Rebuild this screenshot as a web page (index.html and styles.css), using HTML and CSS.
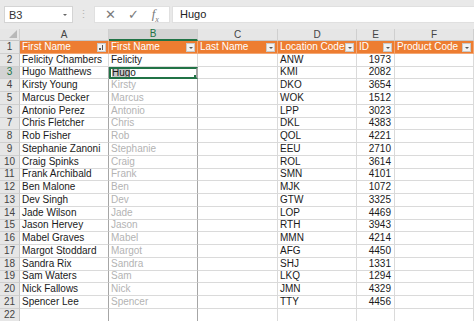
FILE: index.html
```html
<!DOCTYPE html>
<html lang="en">
<head>
    <meta charset="UTF-8">
    <title>Flash Fill - First Name</title>
    <link rel="stylesheet" href="styles.css">
</head>
<body>
    <div class="formula-bar">
        <div class="name-box">B3<span class="name-arrow"></span></div>
        <div class="grip">&#8942;</div>
        <div class="fx-buttons">
            <span class="fx-btn">&#10005;</span>
            <span class="fx-btn">&#10003;</span>
            <span class="fx-btn fx">f<sub>x</sub></span>
        </div>
        <div class="formula-input">Hugo</div>
    </div>

    <div class="sheet">
        <div class="row col-heads">
            <div class="corner"></div>
            <div>A</div>
            <div class="sel">B</div>
            <div>C</div>
            <div>D</div>
            <div>E</div>
            <div>F</div>
        </div>
        <div class="row table-head">
            <div class="rh">1</div>
            <div>First Name<span class="filter sort"></span></div>
            <div>First Name<span class="filter"></span></div>
            <div>Last Name<span class="filter"></span></div>
            <div>Location Code<span class="filter"></span></div>
            <div>ID<span class="filter"></span></div>
            <div>Product Code<span class="filter"></span></div>
        </div>
        <div class="row">
            <div class="rh">2</div><div>Felicity Chambers</div><div>Felicity</div><div></div><div>ANW</div><div class="num">1973</div><div></div>
        </div>
        <div class="row fill">
            <div class="rh sel">3</div><div>Hugo Matthews</div><div class="active"><span class="typed">Hug</span>o</div><div></div><div>KMI</div><div class="num">2082</div><div></div>
        </div>
        <div class="row fill">
            <div class="rh">4</div><div>Kirsty Young</div><div class="ghost">Kirsty</div><div></div><div>DKO</div><div class="num">3654</div><div></div>
        </div>
        <div class="row fill">
            <div class="rh">5</div><div>Marcus Decker</div><div class="ghost">Marcus</div><div></div><div>WOK</div><div class="num">1512</div><div></div>
        </div>
        <div class="row fill">
            <div class="rh">6</div><div>Antonio Perez</div><div class="ghost">Antonio</div><div></div><div>LPP</div><div class="num">3023</div><div></div>
        </div>
        <div class="row fill">
            <div class="rh">7</div><div>Chris Fletcher</div><div class="ghost">Chris</div><div></div><div>DKL</div><div class="num">4383</div><div></div>
        </div>
        <div class="row fill">
            <div class="rh">8</div><div>Rob Fisher</div><div class="ghost">Rob</div><div></div><div>QOL</div><div class="num">4221</div><div></div>
        </div>
        <div class="row fill">
            <div class="rh">9</div><div>Stephanie Zanoni</div><div class="ghost">Stephanie</div><div></div><div>EEU</div><div class="num">2710</div><div></div>
        </div>
        <div class="row fill">
            <div class="rh">10</div><div>Craig Spinks</div><div class="ghost">Craig</div><div></div><div>ROL</div><div class="num">3614</div><div></div>
        </div>
        <div class="row fill">
            <div class="rh">11</div><div>Frank Archibald</div><div class="ghost">Frank</div><div></div><div>SMN</div><div class="num">4101</div><div></div>
        </div>
        <div class="row fill">
            <div class="rh">12</div><div>Ben Malone</div><div class="ghost">Ben</div><div></div><div>MJK</div><div class="num">1072</div><div></div>
        </div>
        <div class="row fill">
            <div class="rh">13</div><div>Dev Singh</div><div class="ghost">Dev</div><div></div><div>GTW</div><div class="num">3325</div><div></div>
        </div>
        <div class="row fill">
            <div class="rh">14</div><div>Jade Wilson</div><div class="ghost">Jade</div><div></div><div>LOP</div><div class="num">4469</div><div></div>
        </div>
        <div class="row fill">
            <div class="rh">15</div><div>Jason Hervey</div><div class="ghost">Jason</div><div></div><div>RTH</div><div class="num">3943</div><div></div>
        </div>
        <div class="row fill">
            <div class="rh">16</div><div>Mabel Graves</div><div class="ghost">Mabel</div><div></div><div>MMN</div><div class="num">4214</div><div></div>
        </div>
        <div class="row fill">
            <div class="rh">17</div><div>Margot Stoddard</div><div class="ghost">Margot</div><div></div><div>AFG</div><div class="num">4450</div><div></div>
        </div>
        <div class="row fill">
            <div class="rh">18</div><div>Sandra Rix</div><div class="ghost">Sandra</div><div></div><div>SHJ</div><div class="num">1331</div><div></div>
        </div>
        <div class="row fill">
            <div class="rh">19</div><div>Sam Waters</div><div class="ghost">Sam</div><div></div><div>LKQ</div><div class="num">1294</div><div></div>
        </div>
        <div class="row fill">
            <div class="rh">20</div><div>Nick Fallows</div><div class="ghost">Nick</div><div></div><div>JMN</div><div class="num">4329</div><div></div>
        </div>
        <div class="row fill">
            <div class="rh">21</div><div>Spencer Lee</div><div class="ghost">Spencer</div><div></div><div>TTY</div><div class="num">4456</div><div></div>
        </div>
        <div class="row fill">
            <div class="rh">22</div><div></div><div></div><div></div><div></div><div></div><div></div>
        </div>
    </div>
</body>
</html>
```

FILE: styles.css
```css
* {
    margin: 0;
    padding: 0;
    box-sizing: border-box;
}

body {
    font-family: 'Liberation Sans', Arial, sans-serif;
    font-size: 10px;
    background: #fff;
    width: 474px;
    height: 321px;
    overflow: hidden;
    color: #1a1a1a;
}

/* formula bar */
.formula-bar {
    height: 29px;
    background: #e9e9e9;
    display: flex;
    align-items: flex-start;
    padding: 6px 0 0 4px;
}

.name-box {
    width: 69px;
    height: 17px;
    background: #fff;
    border: 1px solid #d4d4d4;
    display: flex;
    align-items: center;
    justify-content: space-between;
    padding: 0 5px 0 4px;
    font-size: 11px;
    color: #333;
}

.name-arrow {
    border-left: 2px solid transparent;
    border-right: 2px solid transparent;
    border-top: 2px solid #666;
}

.grip {
    width: 21px;
    text-align: center;
    color: #b5b5b5;
    font-size: 11px;
    line-height: 17px;
}

.fx-buttons {
    width: 76px;
    height: 17px;
    background: #fff;
    border: 1px solid #e0e0e0;
    display: flex;
    align-items: center;
    justify-content: space-around;
    padding: 0 4px;
    color: #7a7a7a;
    font-size: 13px;
}

.fx {
    font-family: 'Liberation Serif', serif;
    font-style: italic;
    font-size: 13px;
}

.fx sub {
    font-size: 8px;
}

.formula-input {
    flex: 1;
    height: 17px;
    margin-left: 2px;
    background: #fff;
    border: 1px solid #e0e0e0;
    border-right: none;
    padding-left: 7px;
    font-size: 11px;
    line-height: 15px;
    color: #222;
}

/* grid */
.row {
    display: grid;
    grid-template-columns: 20px 89px 89px 80px 79px 38px 79px;
    height: 12.75px;
}

.row > div {
    border-right: 1px solid #dadada;
    border-bottom: 1px solid #dadada;
    padding: 0 2px;
    white-space: nowrap;
    overflow: hidden;
    display: flex;
    align-items: center;
    line-height: 1;
}

.row > .num {
    justify-content: flex-end;
    padding-right: 3px;
}

.rh {
    background: #e6e6e6;
    color: #444;
    justify-content: center;
    border-right-color: #c6c6c6 !important;
    border-bottom-color: #cfcfcf !important;
}

.rh.sel {
    background: #d3d3d3;
    color: #217346;
}

.col-heads {
    height: 12px;
}

.col-heads > div {
    background: #e6e6e6;
    color: #444;
    justify-content: center;
    border-right-color: #cfcfcf;
    border-bottom-color: #c6c6c6;
}

.col-heads > .sel {
    background: #d3d3d3;
    color: #217346;
    border-bottom: 2px solid #217346;
}

.col-heads > .corner {
    position: relative;
}

.corner::after {
    content: "";
    position: absolute;
    right: 2px;
    bottom: 2px;
    border-left: 8px solid transparent;
    border-bottom: 8px solid #b8b8b8;
}

.table-head > div:not(.rh) {
    background: #ed7d31;
    color: #fff;
    border-right-color: #f3a774;
    border-bottom-color: #f3a774;
    position: relative;
}

.filter {
    position: absolute;
    right: 2px;
    top: 2px;
    width: 9px;
    height: 9px;
    background: #f2f2f2;
    border: 1px solid #c9c9c9;
}

.filter::after {
    content: "";
    position: absolute;
    left: 2px;
    top: 3px;
    border-left: 2px solid transparent;
    border-right: 2px solid transparent;
    border-top: 2px solid #555;
}

.filter.sort::after {
    left: 4px;
    top: 1px;
    border: none;
    width: 1px;
    height: 5px;
    background: #555;
}

.filter.sort::before {
    content: "";
    position: absolute;
    left: 1px;
    top: 4px;
    width: 2px;
    height: 2px;
    background: #555;
}

/* flash fill preview column */
.fill > div:nth-child(2) {
    border-right-color: #a6a6a6;
}

.fill > div:nth-child(3) {
    border-right-color: #a6a6a6;
}

.ghost {
    color: #b3b3b3;
}

.row > .active {
    border: 2px solid #217346;
    padding-left: 1px;
    position: relative;
}

.active::after {
    content: "";
    position: absolute;
    right: -3px;
    bottom: -3px;
    width: 4px;
    height: 4px;
    background: #217346;
    border: 1px solid #fff;
}

.typed {
    background: #c8c8c8;
}
```
